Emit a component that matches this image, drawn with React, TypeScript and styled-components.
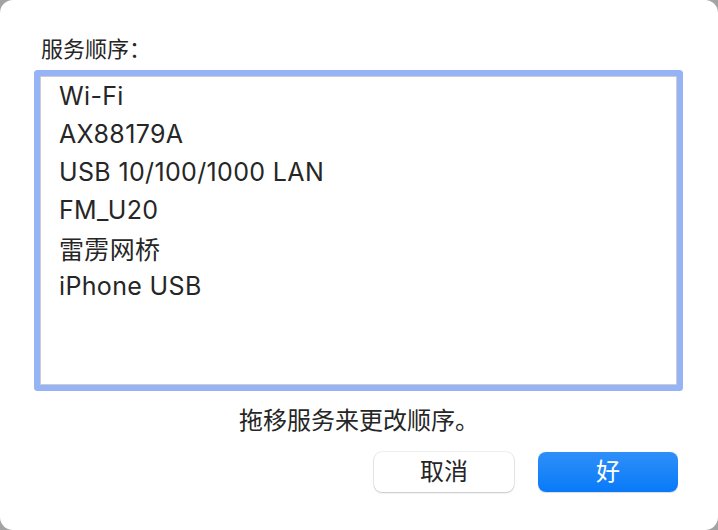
import React from "react";
import styled, { createGlobalStyle } from "styled-components";

const GlobalStyle = createGlobalStyle`
  html, body {
    margin: 0;
    padding: 0;
    background: #a3a3a3;
  }
  body {
    font-family: Inter, "Noto Sans CJK SC", sans-serif;
    -webkit-font-smoothing: antialiased;
  }
`;

const Sheet = styled.div`
  width: 718px;
  height: 530px;
  box-sizing: border-box;
  background: #ffffff;
  border-radius: 13px;
  padding: 36px 40px 38px 40px;
  display: flex;
  flex-direction: column;
  color: #262626;
`;

const Label = styled.div`
  font-size: 22px;
  line-height: 26px;
  padding-left: 1px;
  margin-bottom: 14px;
`;

const ListBox = styled.ul`
  margin: 0 1px 0 0;
  padding: 0 0 0 18px;
  list-style: none;
  height: 309px;
  box-sizing: border-box;
  border: 1px solid #cdcdcd;
  background: #ffffff;
  box-shadow: 0 0 0 6px #96b3f6;
  border-radius: 1px;
`;

const Item = styled.li`
  height: 38px;
  display: flex;
  align-items: center;
  font-size: 25px;
  letter-spacing: 0.35px;
`;

const Hint = styled.div`
  margin-top: 21px;
  text-align: center;
  font-size: 24px;
  line-height: 30px;
`;

const Buttons = styled.div`
  margin-top: 16px;
  display: flex;
  justify-content: flex-end;
  gap: 24px;
`;

const Button = styled.button<{ $primary?: boolean }>`
  width: 140px;
  height: 40px;
  border-radius: 8px;
  font-family: inherit;
  font-size: 24px;
  line-height: 1;
  display: flex;
  align-items: center;
  justify-content: center;
  cursor: pointer;
  border: none;
  color: ${(p) => (p.$primary ? "#ffffff" : "#262626")};
  background: ${(p) =>
    p.$primary ? "linear-gradient(to bottom, #2f8ff9, #087af8)" : "#ffffff"};
  box-shadow: ${(p) =>
    p.$primary
      ? "0 0.5px 1px rgba(0,0,0,0.15)"
      : "0 0 0 0.5px rgba(0,0,0,0.12), 0 1px 2px rgba(0,0,0,0.18)"};
`;

const services = [
  "Wi-Fi",
  "AX88179A",
  "USB 10/100/1000 LAN",
  "FM_U20",
  "雷雳网桥",
  "iPhone USB",
];

export default function App() {
  return (
    <>
      <GlobalStyle />
      <Sheet>
        <Label>服务顺序：</Label>
        <ListBox>
          {services.map((s) => (
            <Item key={s}>{s}</Item>
          ))}
        </ListBox>
        <Hint>拖移服务来更改顺序。</Hint>
        <Buttons>
          <Button>取消</Button>
          <Button $primary>好</Button>
        </Buttons>
      </Sheet>
    </>
  );
}
